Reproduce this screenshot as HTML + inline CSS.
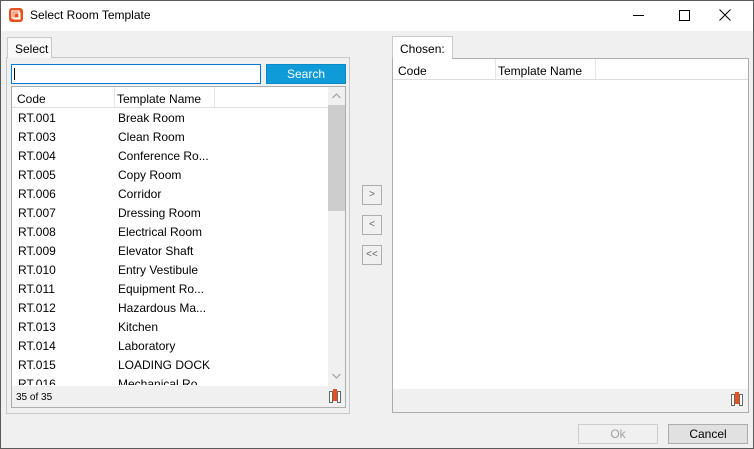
<!DOCTYPE html><html><head><style>
*{margin:0;padding:0;box-sizing:border-box}
body{width:754px;height:449px;position:relative;overflow:hidden;background:#f0f0f0;font-family:"Liberation Sans",sans-serif;font-size:12px;color:#000}
.a{position:absolute}
.row{position:absolute;left:18px;height:19px;line-height:19px;font-size:12px}
.row span{position:absolute;left:100px;white-space:nowrap}
.btn{position:absolute;border:1px solid #adadad;background:#e1e1e1;text-align:center;color:#666;font-size:10px}
</style></head><body>
<div class="a" style="left:0;top:0;width:754px;height:449px;border:1px solid #5a5a5a;z-index:5;pointer-events:none"></div>
<div class="a" style="left:0;top:0;width:754px;height:31px;background:#fff"></div>
<svg class="a" style="left:8px;top:7px" width="16" height="16" viewBox="0 0 16 16"><rect x="1" y="1" width="14" height="14" rx="3" fill="#e8501e"/><rect x="4" y="4" width="7" height="7" fill="none" stroke="#fff" stroke-width="1.2"/><rect x="6" y="6" width="6" height="6" fill="none" stroke="#fff" stroke-width="1"/></svg>
<div class="a" style="left:30px;top:8px;font-size:12px">Select Room Template</div>
<div class="a" style="left:633px;top:15px;width:11px;height:1px;background:#000"></div>
<div class="a" style="left:679px;top:10px;width:11px;height:11px;border:1px solid #000"></div>
<svg class="a" style="left:719px;top:9px" width="12" height="12"><path d="M0.5 0.5L11.5 11.5M11.5 0.5L0.5 11.5" stroke="#000" stroke-width="1"/></svg>

<div class="a" style="left:6px;top:57px;width:344px;height:357px;border:1px solid #c8c8c8;background:#f0f0f0"></div>
<div class="a" style="left:7px;top:37px;width:45px;height:21px;border:1px solid #c8c8c8;border-bottom:none;background:#f9f9f9;padding:4px 0 0 7px">Select</div>
<div class="a" style="left:11px;top:64px;width:250px;height:20px;border:1px solid #0078d7;background:#fff"><div class="a" style="left:2px;top:3px;width:1px;height:12px;background:#000"></div></div>
<div class="a" style="left:266px;top:64px;width:80px;height:20px;background:#0e9bd8;border:1px solid #0a8ac4;color:#fff;text-align:center;line-height:18px">Search</div>
<div class="a" style="left:11px;top:86px;width:335px;height:322px;border:1px solid #adadad;background:#fff;overflow:hidden">
 <div class="a" style="left:0;top:0;width:316px;height:21px;border-bottom:1px solid #ddd"></div>
 <div class="a" style="left:5px;top:5px">Code</div>
 <div class="a" style="left:102px;top:0;width:1px;height:20px;background:#e5e5e5"></div>
 <div class="a" style="left:105px;top:5px">Template Name</div>
 <div class="a" style="left:202px;top:0;width:1px;height:20px;background:#e5e5e5"></div>
 <div class="a" style="left:316px;top:0;width:17px;height:299px;background:#f0f0f0"></div>
 <div class="a" style="left:316px;top:18px;width:17px;height:106px;background:#cdcdcd"></div>
 <svg class="a" style="left:320px;top:6px" width="9" height="6"><path d="M0.5 5L4.5 1L8.5 5" fill="none" stroke="#999"/></svg>
 <svg class="a" style="left:320px;top:286px" width="9" height="6"><path d="M0.5 1L4.5 5L8.5 1" fill="none" stroke="#999"/></svg>
 <div class="a" style="left:0;top:299px;width:333px;height:21px;background:#f0f0f0"></div>
 <div class="a" style="left:4px;top:305px;font-size:10px">35 of 35</div>
 <svg class="a" style="left:316px;top:302px" width="14" height="15"><rect x="1.5" y="2.5" width="3" height="11" fill="#fff" stroke="#666"/><rect x="9.5" y="2.5" width="3" height="11" fill="#fff" stroke="#666"/><rect x="5" y="0" width="4" height="12" fill="#e8501e"/></svg>
</div>
<div class="a" style="left:0;top:109px;width:330px;height:276px;overflow:hidden">
<div class="row" style="top:0">RT.001<span>Break Room</span></div>
<div class="row" style="top:19px">RT.003<span>Clean Room</span></div>
<div class="row" style="top:38px">RT.004<span>Conference Ro...</span></div>
<div class="row" style="top:57px">RT.005<span>Copy Room</span></div>
<div class="row" style="top:76px">RT.006<span>Corridor</span></div>
<div class="row" style="top:95px">RT.007<span>Dressing Room</span></div>
<div class="row" style="top:114px">RT.008<span>Electrical Room</span></div>
<div class="row" style="top:133px">RT.009<span>Elevator Shaft</span></div>
<div class="row" style="top:152px">RT.010<span>Entry Vestibule</span></div>
<div class="row" style="top:171px">RT.011<span>Equipment Ro...</span></div>
<div class="row" style="top:190px">RT.012<span>Hazardous Ma...</span></div>
<div class="row" style="top:209px">RT.013<span>Kitchen</span></div>
<div class="row" style="top:228px">RT.014<span>Laboratory</span></div>
<div class="row" style="top:247px">RT.015<span>LOADING DOCK</span></div>
<div class="row" style="top:266px">RT.016<span>Mechanical Ro...</span></div>
</div>

<div class="btn" style="left:362px;top:185px;width:20px;height:20px;line-height:18px;background:#f0f0f0">&gt;</div>
<div class="btn" style="left:362px;top:215px;width:20px;height:20px;line-height:18px;background:#f0f0f0">&lt;</div>
<div class="btn" style="left:362px;top:245px;width:20px;height:20px;line-height:18px;background:#f0f0f0">&lt;&lt;</div>

<div class="a" style="left:392px;top:58px;width:357px;height:355px;border:1px solid #adadad;background:#fff"></div>
<div class="a" style="left:392px;top:36px;width:61px;height:23px;border:1px solid #c8c8c8;border-bottom:none;background:#fff;padding:5px 0 0 7px">Chosen:</div>
<div class="a" style="left:393px;top:59px;width:355px;height:21px;border-bottom:1px solid #ddd"></div>
<div class="a" style="left:398px;top:64px">Code</div>
<div class="a" style="left:495px;top:59px;width:1px;height:20px;background:#e5e5e5"></div>
<div class="a" style="left:498px;top:64px">Template Name</div>
<div class="a" style="left:595px;top:59px;width:1px;height:20px;background:#e5e5e5"></div>
<div class="a" style="left:393px;top:389px;width:355px;height:23px;background:#f0f0f0"></div>
<svg class="a" style="left:730px;top:392px" width="14" height="15"><rect x="1.5" y="2.5" width="3" height="11" fill="#fff" stroke="#666"/><rect x="9.5" y="2.5" width="3" height="11" fill="#fff" stroke="#666"/><rect x="5" y="0" width="4" height="12" fill="#e8501e"/></svg>

<div class="btn" style="left:578px;top:424px;width:80px;height:20px;line-height:18px;background:#f0f0f0;border-color:#ccc;color:#a0a0a0;font-size:12px">Ok</div>
<div class="btn" style="left:668px;top:424px;width:80px;height:20px;line-height:18px;color:#000;font-size:12px">Cancel</div>
</body></html>
